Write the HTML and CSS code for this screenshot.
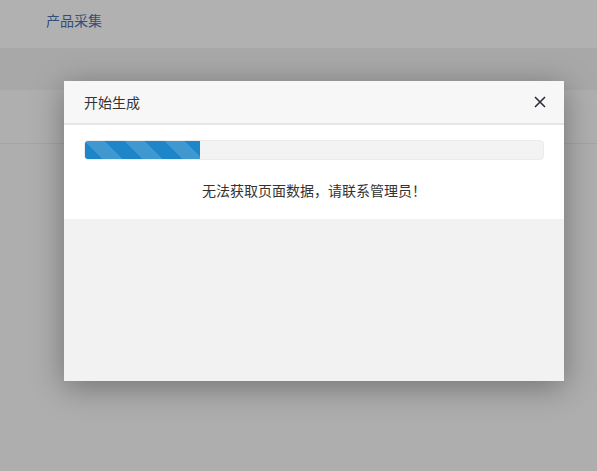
FILE: index.html
```html
<!DOCTYPE html>
<html lang="zh-CN">
<head>
<meta charset="utf-8">
<title>产品采集</title>
<link rel="stylesheet" href="styles.css">
</head>
<body>
<div class="page">
  <header class="topbar"><span class="brand">产品采集</span></header>
  <div class="band"></div>
  <div class="row"></div>
</div>
<div class="shade"></div>
<div class="dialog">
  <div class="dlg-head">
    <span class="dlg-title">开始生成</span>
    <svg class="dlg-close" width="12" height="12" viewBox="0 0 12 12"><path d="M1 1L11 11M11 1L1 11" stroke="#2e2e3a" stroke-width="1.6" fill="none"/></svg>
  </div>
  <div class="dlg-body">
    <div class="progress"><div class="progress-fill" style="width:25%"></div></div>
    <p class="msg">无法获取页面数据，请联系管理员！</p>
  </div>
  <div class="dlg-frame"></div>
</div>
</body>
</html>
```
FILE: styles.css
```css
html, body {
  margin: 0;
  padding: 0;
  background: #fbfbfb;
  font-family: "Noto Sans CJK SC", "Noto Sans", sans-serif;
  font-size: 14px;
  color: #333;
}
.page {
  width: 597px;
  min-height: 471px;
}
.topbar {
  height: 48px;
  box-sizing: border-box;
  background: #ffffff;
  display: flex;
  align-items: flex-start;
  padding: 13px 0 0 46px;
}
.brand {
  color: #4a70ad;
  font-size: 14px;
  line-height: 14px;
}
.band {
  height: 42px;
  background: #f2f2f2;
}
.row {
  height: 53px;
  background: #fcfcfc;
  border-bottom: 1px solid #ececec;
}
.shade {
  position: fixed;
  inset: 0;
  background: rgba(0, 0, 0, 0.305);
}
.dialog {
  position: absolute;
  left: 64px;
  top: 81px;
  width: 500px;
  height: 300px;
  background: #f2f2f2;
  display: flex;
  flex-direction: column;
  box-shadow: 0 6px 30px rgba(0, 0, 0, 0.35);
}
.dlg-head {
  height: 42px;
  background: #f7f7f7;
  border-bottom: 2px solid #e6e6e6;
  display: flex;
  align-items: center;
  justify-content: space-between;
  padding: 0 18px 0 20px;
}
.dlg-title {
  font-size: 14px;
  color: #333;
  line-height: 1;
}
.dlg-close {
  display: block;
}
.dlg-body {
  background: #ffffff;
  padding: 15px 20px 0;
  height: 79px;
}
.progress {
  height: 20px;
  background: #f3f3f3;
  border: 1px solid #ececec;
  box-sizing: border-box;
  border-radius: 4px;
  overflow: hidden;
}
.progress-fill {
  height: 100%;
  margin: -1px 0 0 -1px;
  padding: 1px 0 1px 1px;
  background-color: #1e86c8;
  background-image: linear-gradient(45deg, rgba(255,255,255,0.15) 25%, transparent 25%, transparent 50%, rgba(255,255,255,0.15) 50%, rgba(255,255,255,0.15) 75%, transparent 75%, transparent);
  background-size: 40px 40px;
  border-radius: 4px 0 0 4px;
}
.msg {
  margin: 19px 0 0;
  text-align: center;
  font-size: 14px;
  line-height: 22px;
  color: #333;
}
.dlg-frame {
  flex: 1;
  background: #f2f2f2;
}
```
